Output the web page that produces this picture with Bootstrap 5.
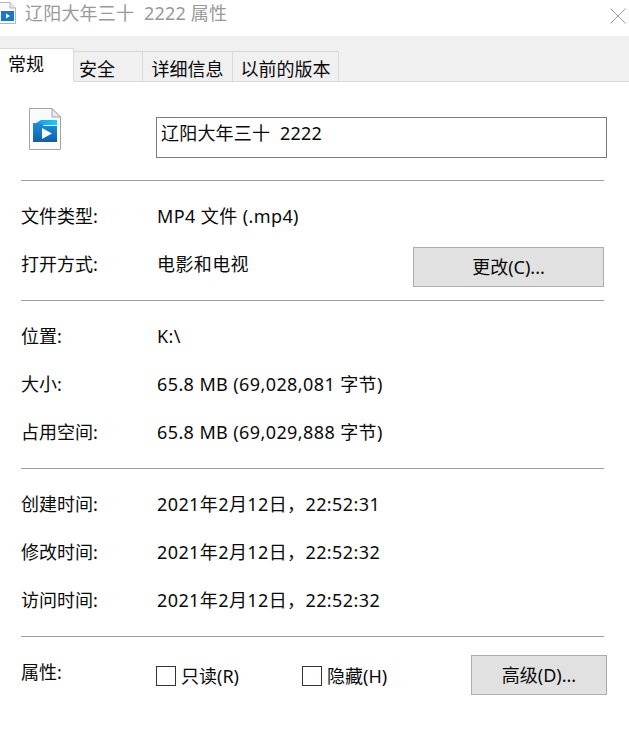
<!DOCTYPE html>
<html lang="zh">
<head>
<meta charset="utf-8">
<title>属性</title>
<link rel="stylesheet" href="https://cdn.jsdelivr.net/npm/bootstrap@5.3.0/dist/css/bootstrap.min.css">
<style>
body{font-family:"Noto Sans","Noto Sans CJK SC",sans-serif;font-size:18px;line-height:24px;color:#0a0a0a;background:#fff;width:629px;height:737px;overflow:hidden}
.titlebar{height:36px;padding-top:2px}
.titlebar-text{color:#999;margin-left:9px;margin-top:-1px;white-space:pre;letter-spacing:.2px}
.closex{margin-right:3px;margin-top:6px}
.tabstrip{height:46px;background:#f0f0f0;border-bottom:1px solid #d9d9d9;align-items:flex-end}
.tabstrip .nav-link{height:31px;margin-bottom:-1px;padding:5px 0 0;border:1px solid #d9d9d9;border-left:0;border-radius:0;color:#0a0a0a;background:#f0f0f0;text-align:center}
.tabstrip .nav-link.active{height:34px;width:74px;padding:3px 0 0 8px;text-align:left;background:#fff;border-color:#d9d9d9;border-left:0;border-bottom-color:#fff;color:#0a0a0a}
.tabstrip .nav-link.tab-b{width:69px;padding-left:5px;text-align:left}
.tab-c{width:90px}.tab-d{width:106px}
.sheet{padding:0 25px 0 21px}
.head-row{height:98px;padding-top:26px}
.bigicon{margin-left:8px;width:32px;height:42px;flex:none}
.name-input{width:451px;flex:none;height:41px;margin-left:95px;margin-top:9px;margin-right:-3px;padding:0 4px 12px;border:1px solid #7a7a7a;border-radius:0;font-size:18px;line-height:24px;color:#0a0a0a;white-space:pre;letter-spacing:.2px}
.name-input:focus{box-shadow:none;border-color:#7a7a7a}
.sep{margin:0;border:0;border-top:1px solid #a0a0a0;opacity:1}
.block{padding:12px 0 11px}
.line{height:48px;align-items:center}
.lab{width:136px;flex:none;margin-top:-2px}
.val{letter-spacing:.4px;margin-top:-2px}
.win-btn{background:#e1e1e1;border:1px solid #adadad;border-radius:0;color:#0a0a0a;font-size:18px;line-height:24px;height:40px;padding:0;margin-top:4px;flex:none}
.win-btn:hover{background:#e1e1e1;border-color:#adadad;color:#0a0a0a}
.btn-change{width:191px}
.btn-adv{width:136px;margin-right:-3px}
.chk{gap:5px;margin-top:6px}
.chk-a{width:146px;margin-left:-1px}
.box.form-check-input{width:20px;height:20px;margin:0;border:1px solid #333;border-radius:0;flex:none}
</style>
</head>
<body>
<div class="titlebar d-flex justify-content-between align-items-start">
  <div class="d-flex">
    <svg width="16" height="22" viewBox="0 0 16 22"><path d="M-1 .5H10L15.500 6V21.500H-1Z" fill="#f7f9fb" stroke="#b5b5b5"/><path d="M10 .5V6H15.500" fill="#e8e8e8" stroke="#b5b5b5"/><rect x="1" y="9" width="13" height="10" fill="#1a78c2"/><path d="M6 11.500v5l4-2.500z" fill="#fff"/></svg>
    <div class="titlebar-text">辽阳大年三十  2222 属性</div>
  </div>
  <svg class="closex" width="16" height="16" viewBox="0 0 16 16"><path d="M.5.5l15 15M15.500.5l-15 15" stroke="#9a9a9a" fill="none"/></svg>
</div>
<ul class="nav tabstrip">
  <li class="nav-item"><a class="nav-link active" href="#">常规</a></li>
  <li class="nav-item"><a class="nav-link tab-b" href="#">安全</a></li>
  <li class="nav-item"><a class="nav-link tab-c" href="#">详细信息</a></li>
  <li class="nav-item"><a class="nav-link tab-d" href="#">以前的版本</a></li>
</ul>
<div class="sheet">
  <div class="head-row d-flex align-items-start">
    <svg class="bigicon" viewBox="0 0 32 42">
      <defs>
        <linearGradient id="g" x1="0" y1="0" x2="0" y2="1"><stop offset="0" stop-color="#1e8fdc"/><stop offset="1" stop-color="#0f5fa8"/></linearGradient>
        <linearGradient id="c" x1="0" y1="0" x2="1" y2="0"><stop offset="0" stop-color="#1c8fd8"/><stop offset="1" stop-color="#2cc4f4"/></linearGradient>
      </defs>
      <path d="M.5.500H23L31.500 9V41.500H.500Z" fill="#f8fafc" stroke="#a3a3a3"/>
      <path d="M23 .5V9H31.500Z" fill="#ececec" stroke="#a3a3a3"/>
      <path d="M4 17L12 12H28V17Z" fill="url(#c)"/>
      <path d="M4 15H12L15 18H28V34H4Z" fill="url(#g)"/>
      <path d="M13 20V31L23 25.500Z" fill="#f4f8fc"/>
    </svg>
    <input class="form-control name-input" type="text" value="辽阳大年三十  2222">
  </div>
  <hr class="sep">
  <div class="block">
    <div class="line d-flex"><div class="lab">文件类型:</div><div class="val">MP4 文件 (.mp4)</div></div>
    <div class="line d-flex"><div class="lab">打开方式:</div><div class="val flex-grow-1">电影和电视</div><button class="btn win-btn btn-change" type="button">更改(C)...</button></div>
  </div>
  <hr class="sep">
  <div class="block">
    <div class="line d-flex"><div class="lab">位置:</div><div class="val">K:\</div></div>
    <div class="line d-flex"><div class="lab">大小:</div><div class="val">65.8 MB (69,028,081 字节)</div></div>
    <div class="line d-flex"><div class="lab">占用空间:</div><div class="val">65.8 MB (69,029,888 字节)</div></div>
  </div>
  <hr class="sep">
  <div class="block">
    <div class="line d-flex"><div class="lab">创建时间:</div><div class="val">2021年2月12日，22:52:31</div></div>
    <div class="line d-flex"><div class="lab">修改时间:</div><div class="val">2021年2月12日，22:52:32</div></div>
    <div class="line d-flex"><div class="lab">访问时间:</div><div class="val">2021年2月12日，22:52:32</div></div>
  </div>
  <hr class="sep">
  <div class="block">
    <div class="line d-flex">
      <div class="lab">属性:</div>
      <label class="chk chk-a d-flex align-items-center"><input class="form-check-input box" type="checkbox">只读(R)</label>
      <label class="chk d-flex align-items-center flex-grow-1"><input class="form-check-input box" type="checkbox">隐藏(H)</label>
      <button class="btn win-btn btn-adv" type="button">高级(D)...</button>
    </div>
  </div>
</div>
<script src="https://cdn.jsdelivr.net/npm/bootstrap@5.3.0/dist/js/bootstrap.bundle.min.js"></script>
</body>
</html>
